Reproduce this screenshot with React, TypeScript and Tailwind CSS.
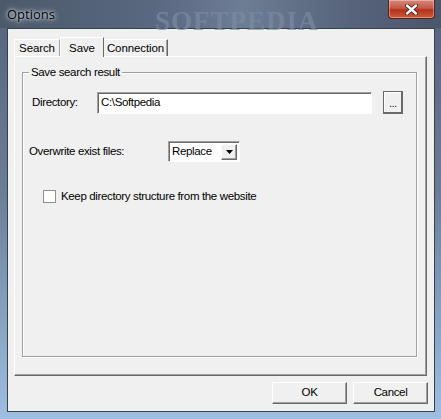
export default function App() {
  const font = "font-['Liberation_Sans',Arial,sans-serif]";
  const raised =
    "border border-t-white border-l-white border-r-[#696969] border-b-[#696969] shadow-[inset_-1px_-1px_0_#a0a0a0]";
  const sunken =
    "border border-t-[#a0a0a0] border-l-[#a0a0a0] border-r-white border-b-white shadow-[inset_1px_1px_0_#696969]";

  return (
    <div
      className={`relative w-[441px] h-[419px] flex flex-col overflow-hidden bg-[linear-gradient(180deg,#56637a_0%,#6b7d95_45%,#9ebfe2_100%)] ${font} text-[11.5px] tracking-[-0.35px] text-black`}
    >
      {/* title bar */}
      <div className="relative h-[28px] flex items-start justify-between bg-[linear-gradient(90deg,#4c596b_0%,#5a6880_35%,#6d7d94_55%,#56637a_80%,#4a576a_100%)]">
        <span className="mt-[5px] ml-[7px] text-[13px] tracking-normal text-black font-['Open_Sans',sans-serif] [text-shadow:0_0_6px_#e8eef5,0_0_3px_#e8eef5]">
          Options
        </span>
        <span className="absolute left-[155px] top-[1px] text-[27px] font-bold tracking-[1px] font-['Liberation_Serif',serif] text-[#7b8ba2]/70">
          SOFTPEDIA
        </span>
        <div className="relative mr-[6px] w-[47px] h-[19px] rounded-b-[4px] border border-t-0 border-[#5a1f18] bg-[linear-gradient(180deg,#d9877a_0%,#c45a48_45%,#b2321c_55%,#cf5a3a_100%)] shadow-[inset_0_0_0_1px_rgba(255,255,255,0.35)] flex items-center justify-center">
          <svg width="13" height="11" viewBox="0 0 13 11">
            <path
              d="M2 1.5 L11 9.5 M11 1.5 L2 9.5"
              stroke="#3a1a14"
              strokeWidth="4"
              strokeLinecap="round"
            />
            <path
              d="M2 1.5 L11 9.5 M11 1.5 L2 9.5"
              stroke="#ffffff"
              strokeWidth="2.4"
              strokeLinecap="round"
            />
          </svg>
        </div>
      </div>

      {/* client area */}
      <div className="ml-[7px] mr-[6px] h-[384px] border border-[#34414f] bg-[#f0f0f0] flex flex-col">
        {/* tabs */}
        <div className="ml-[6px] mt-[8px] h-[19px] flex items-end relative z-10 tracking-[-0.1px]">
          <div className="w-[46px] h-[17px] border border-b-0 border-t-white border-l-white border-r-[#a0a0a0] flex items-center justify-center pt-[1px]">
            Search
          </div>
          <div className="w-[44px] h-[20px] -mb-[1px] bg-[#f0f0f0] border border-b-0 border-t-white border-l-white border-r-[#696969] flex items-start justify-center pt-[2px]">
            Save
          </div>
          <div className="w-[64px] h-[17px] border border-b-0 border-t-white border-l-0 border-r-[#696969] shadow-[inset_-1px_0_0_#a0a0a0] flex items-center justify-center pt-[1px]">
            Connection
          </div>
        </div>

        {/* panel */}
        <div className="ml-[6px] w-[413px] h-[320px] border border-t-white border-l-white border-r-[#696969] border-b-[#696969] shadow-[inset_-1px_-1px_0_#a0a0a0]">
          <div className="relative ml-[7px] mt-[15px] w-[395px] h-[285px] border border-[#a0a0a0] shadow-[inset_1px_1px_0_#fff,1px_1px_0_#fff]">
            <span className="absolute -top-[8px] left-[6px] px-[2px] bg-[#f0f0f0] leading-[14px]">
              Save search result
            </span>

            <div className="mt-[18px] ml-[9px] flex items-center">
              <span className="w-[65px]">Directory:</span>
              <div className={`w-[275px] h-[22px] bg-white ${sunken} flex items-center pl-[3px]`}>
                C:\Softpedia
              </div>
              <div className="ml-[11px] w-[20px] h-[23px] border border-[#696969] shadow-[inset_-1px_-1px_0_#696969,inset_1px_1px_0_#fff] flex items-center justify-center text-[10px] leading-none pt-[3px]">
                ...
              </div>
            </div>

            <div className="mt-[27px] ml-[6px] flex items-center">
              <span className="w-[139px]">Overwrite exist files:</span>
              <div className={`w-[72px] h-[21px] bg-white ${sunken} flex items-center justify-between pl-[3px] pr-[2px]`}>
                <span className="bg-white">Replace</span>
                <div className={`w-[16px] h-[16px] bg-[#f0f0f0] ${raised} flex items-center justify-center`}>
                  <svg width="7" height="4" viewBox="0 0 7 4">
                    <path d="M0 0 H7 L3.5 4 Z" fill="#000" />
                  </svg>
                </div>
              </div>
            </div>

            <div className="mt-[26px] ml-[20px] flex items-center">
              <div className="w-[13px] h-[13px] bg-white border border-[#8e8f8f]" />
              <span className="ml-[5px]">Keep directory structure from the website</span>
            </div>
          </div>
        </div>

        {/* buttons */}
        <div className="mt-[6px] mr-[6px] flex justify-end gap-[6px]">
          <div className={`w-[75px] h-[22px] bg-[#f0f0f0] ${raised} flex items-center justify-center`}>
            OK
          </div>
          <div className={`w-[75px] h-[22px] bg-[#f0f0f0] ${raised} flex items-center justify-center`}>
            Cancel
          </div>
        </div>
      </div>
    </div>
  );
}
